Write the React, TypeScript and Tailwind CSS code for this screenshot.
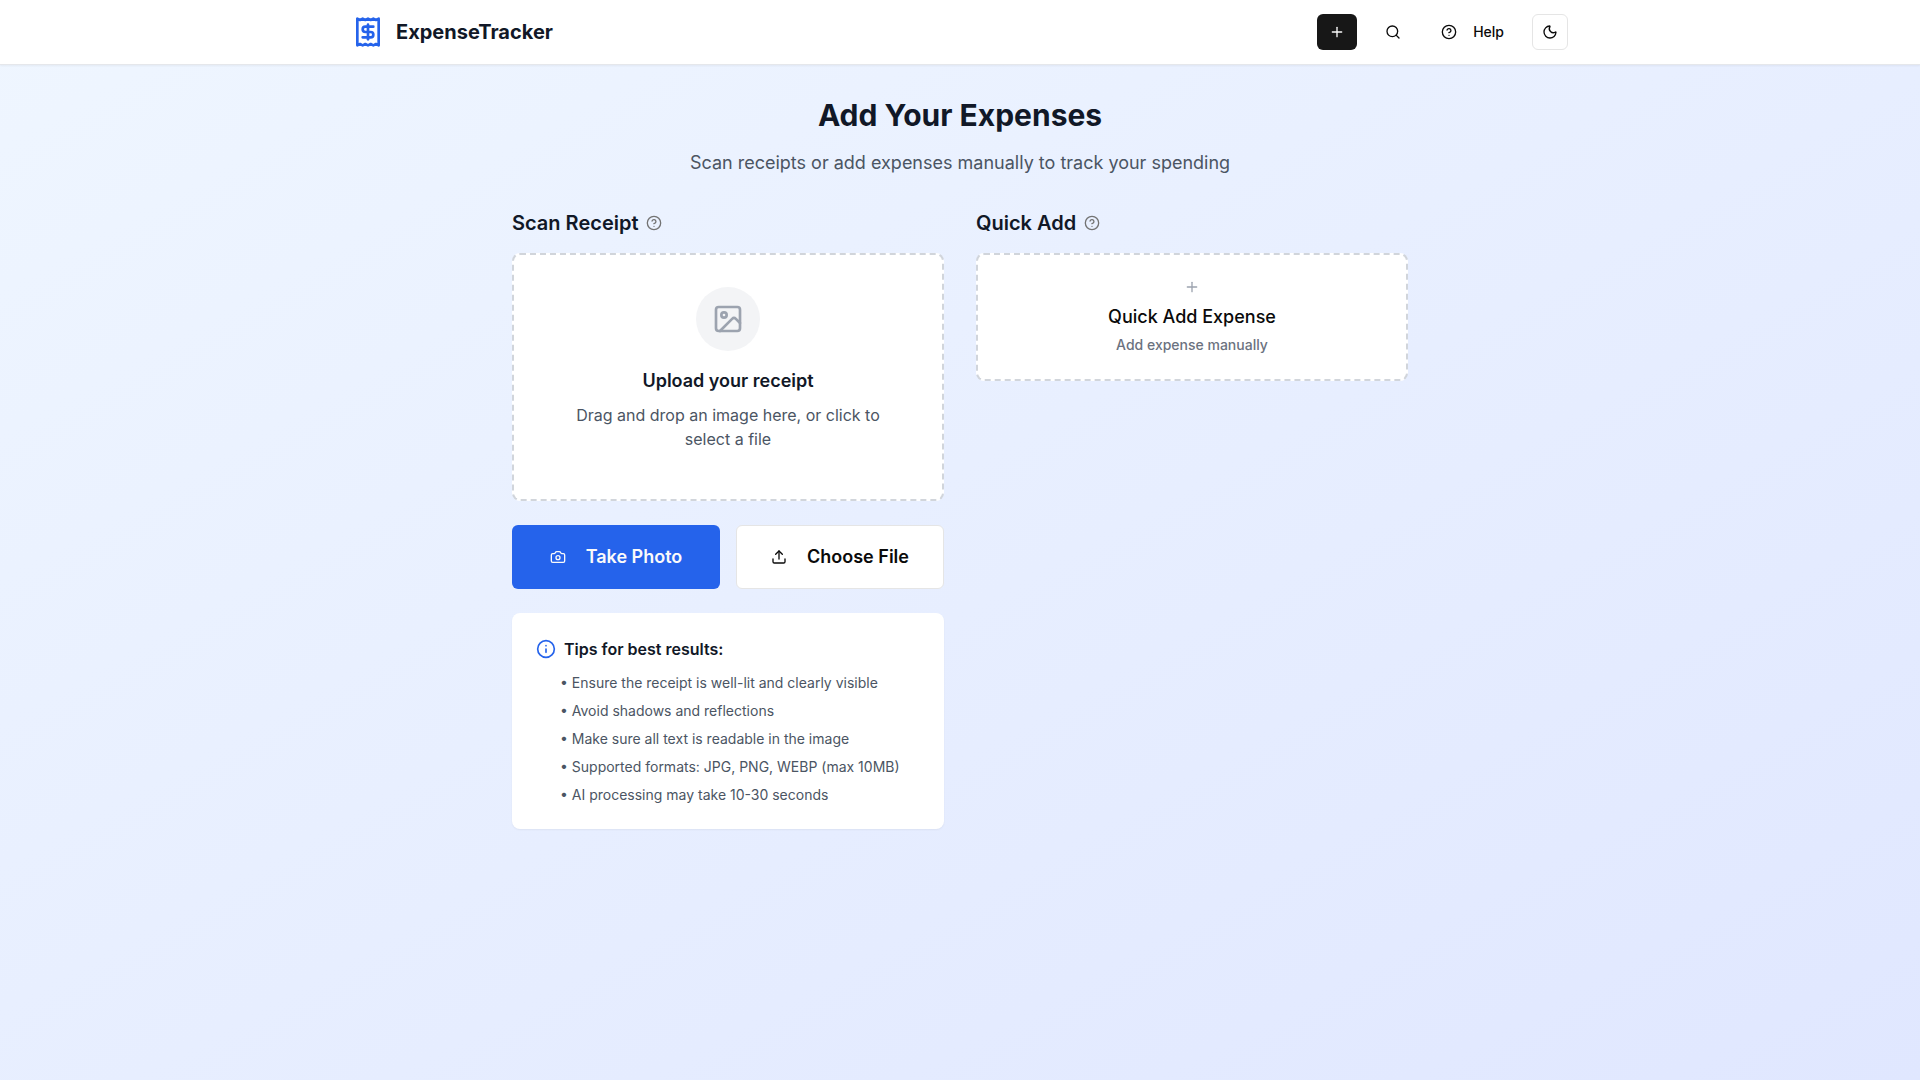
import type { ReactNode } from "react";
import { Camera, CircleQuestionMark, Image, Info, Moon, Plus, Receipt, Search, Upload } from "lucide-react";

const tips = [
  "Ensure the receipt is well-lit and clearly visible",
  "Avoid shadows and reflections",
  "Make sure all text is readable in the image",
  "Supported formats: JPG, PNG, WEBP (max 10MB)",
  "AI processing may take 10-30 seconds",
];

function SectionTitle({ children }: { children: ReactNode }) {
  return (
    <div className="flex items-center gap-2">
      <h2 className="text-xl font-semibold text-[#111827]">{children}</h2>
      <button aria-label="More information" className="text-[#737373]">
        <CircleQuestionMark className="h-4 w-4" />
      </button>
    </div>
  );
}

function Header() {
  return (
    <header className="border-b border-[#e5e7eb] bg-white shadow-xs">
      <div className="mx-auto flex h-16 max-w-7xl items-center justify-between px-8">
        <a href="#" className="flex items-center gap-3">
          <Receipt className="h-8 w-8 text-[#2563eb]" />
          <span className="text-xl font-bold text-[#111827]">ExpenseTracker</span>
        </a>
        <div className="flex items-center gap-4 text-sm font-medium text-neutral-950">
          <button aria-label="Add expense" className="flex h-9 w-10 items-center justify-center rounded-md bg-neutral-900 text-neutral-50">
            <Plus className="h-4 w-4" />
          </button>
          <button aria-label="Search" className="flex h-9 w-10 items-center justify-center rounded-md">
            <Search className="h-4 w-4" />
          </button>
          <button className="flex h-9 items-center gap-4 px-3">
            <CircleQuestionMark className="h-4 w-4" />
            Help
          </button>
          <button aria-label="Toggle theme" className="flex h-9 w-9 items-center justify-center rounded-md border border-neutral-200">
            <Moon className="h-4 w-4" />
          </button>
        </div>
      </div>
    </header>
  );
}

function App() {
  return (
    <div className="min-h-screen bg-linear-to-br/srgb from-[#eff6ff] to-[#e0e7ff] font-['Inter',sans-serif]">
      <Header />
      <main className="mx-auto max-w-4xl py-8">
        <div className="mb-8 text-center">
          <h1 className="mb-4 text-3xl font-bold text-[#111827]">Add Your Expenses</h1>
          <p className="text-lg text-[#4b5563]">Scan receipts or add expenses manually to track your spending</p>
        </div>

        <div className="grid grid-cols-2 items-start gap-8">
          <section className="flex flex-col gap-4">
            <SectionTitle>Scan Receipt</SectionTitle>
            <div className="flex flex-col gap-6">
              <div className="flex flex-col items-center rounded-lg border-2 border-dashed border-[#d1d5db] bg-white p-8 text-center">
                <div className="mb-4 flex h-16 w-16 items-center justify-center rounded-full bg-[#f3f4f6]">
                  <Image className="h-8 w-8 text-[#9ca3af]" />
                </div>
                <h3 className="mb-2 text-lg font-semibold text-[#111827]">Upload your receipt</h3>
                <p className="mb-4 max-w-xs text-base text-[#4b5563]">Drag and drop an image here, or click to select a file</p>
              </div>

              <div className="grid grid-cols-2 gap-4">
                <button className="flex h-16 items-center justify-center gap-5 rounded-md bg-[#2563eb] text-lg font-semibold text-neutral-50">
                  <Camera className="h-4 w-4" />
                  Take Photo
                </button>
                <button className="flex h-16 items-center justify-center gap-5 rounded-md border border-neutral-200 bg-white text-lg font-semibold text-neutral-950">
                  <Upload className="h-4 w-4" />
                  Choose File
                </button>
              </div>

              <div className="rounded-lg bg-white p-6 shadow-xs">
                <h4 className="mb-3 flex items-center gap-2 text-base font-semibold text-[#111827]">
                  <Info className="h-5 w-5 text-[#2563eb]" />
                  Tips for best results:
                </h4>
                <ul className="ml-6 space-y-2 text-sm text-[#4b5563]">
                  {tips.map((tip) => (
                    <li key={tip}>• {tip}</li>
                  ))}
                </ul>
              </div>
            </div>
          </section>

          <section className="flex flex-col gap-4">
            <SectionTitle>Quick Add</SectionTitle>
            <button className="flex h-32 flex-col items-center justify-center rounded-lg border-2 border-dashed border-[#d1d5db] bg-white font-medium">
              <Plus className="mb-2 h-4 w-4 text-[#9ca3af]" />
              <span className="text-lg text-neutral-950">Quick Add Expense</span>
              <span className="mt-1 text-sm text-[#6b7280]">Add expense manually</span>
            </button>
          </section>
        </div>
      </main>
    </div>
  );
}

export default App;
